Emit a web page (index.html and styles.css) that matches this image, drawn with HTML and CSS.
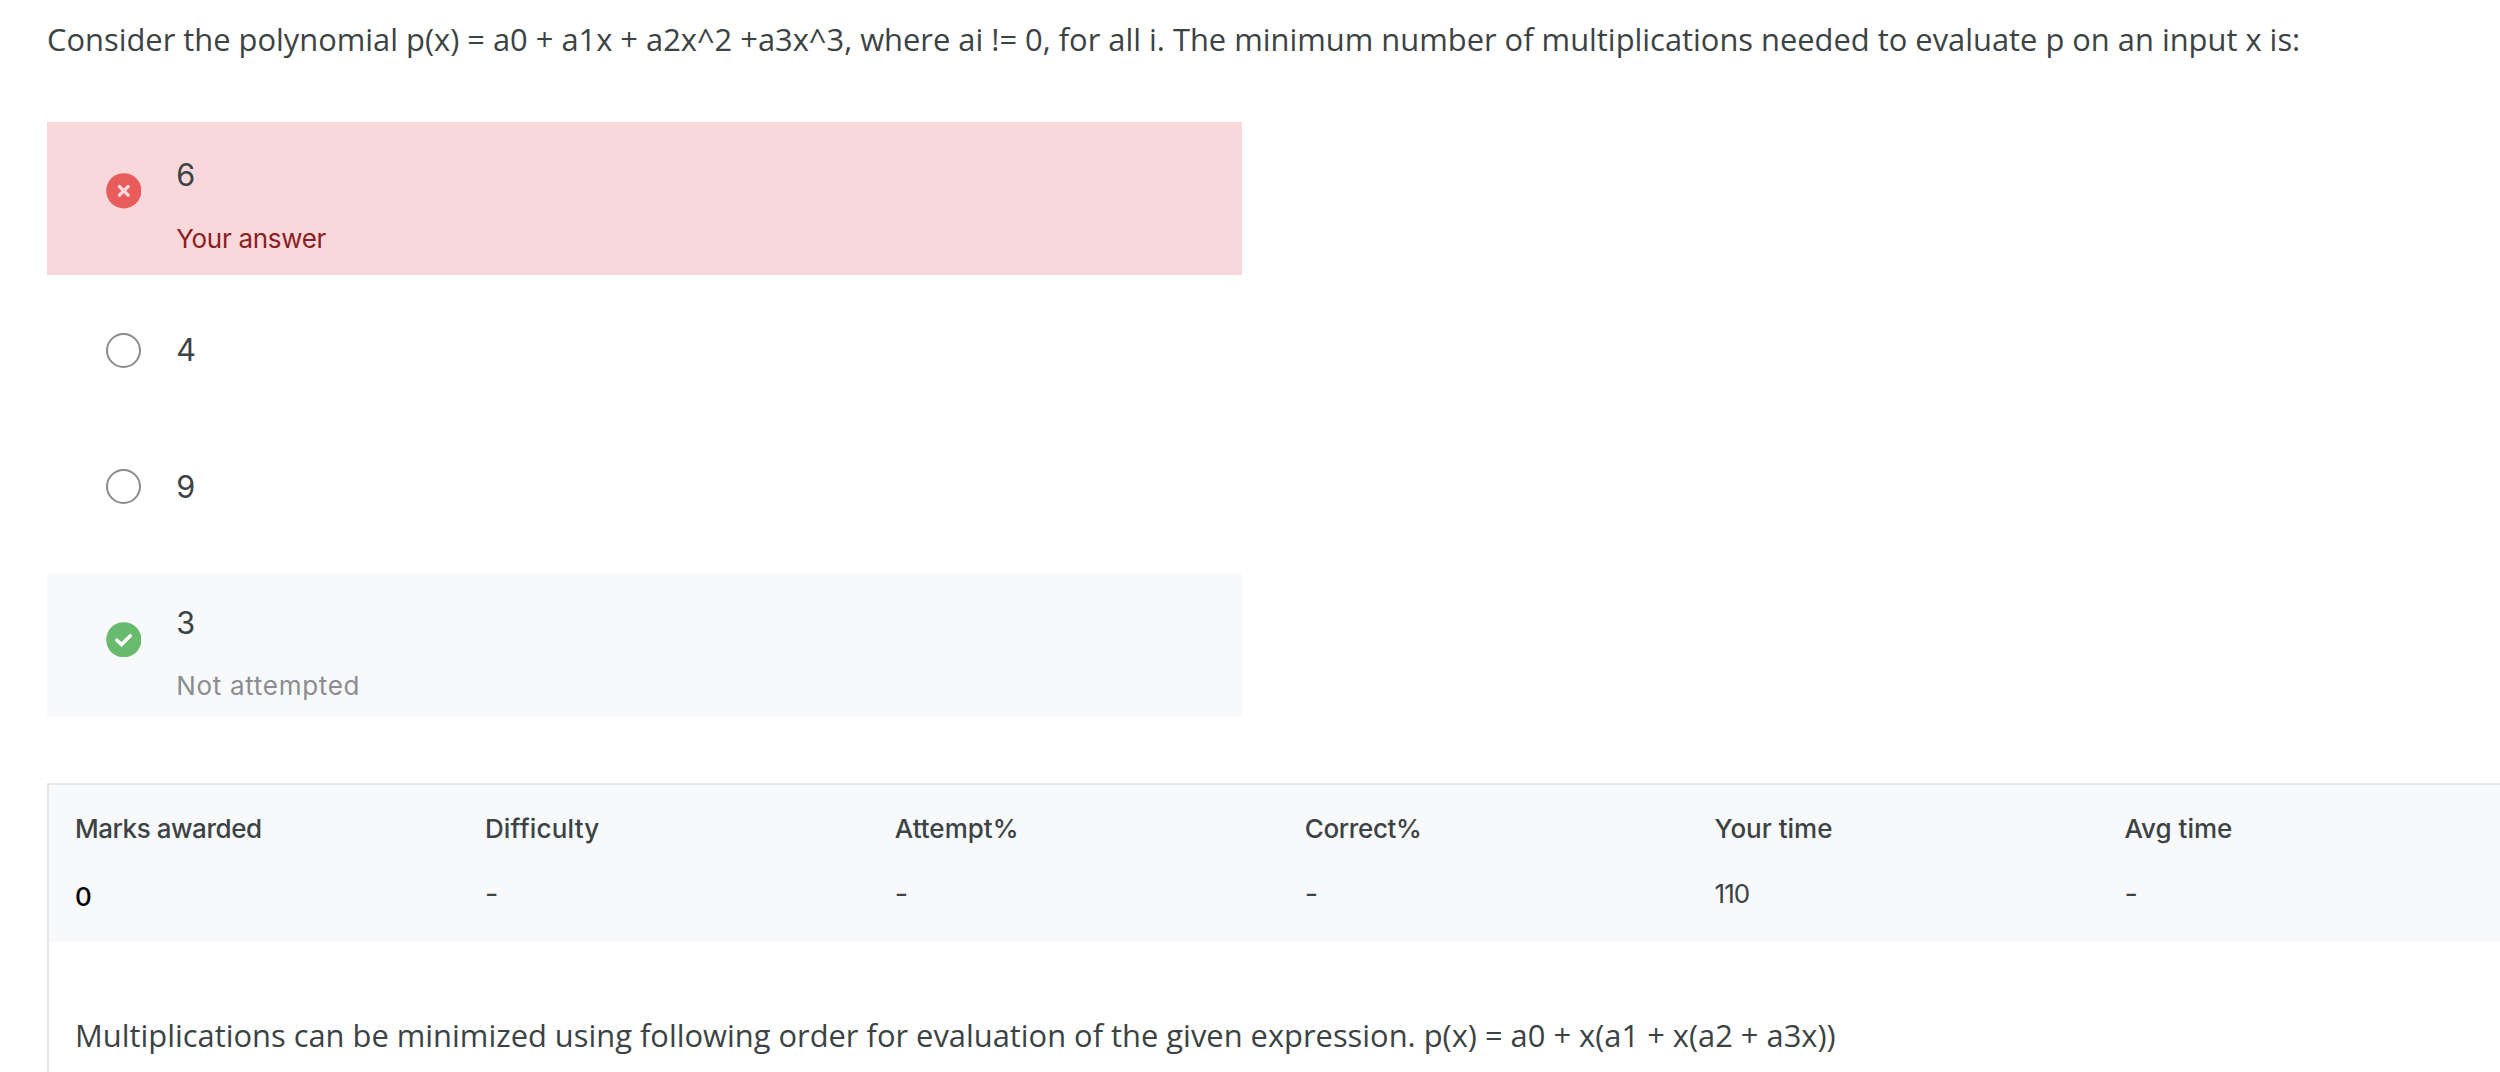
FILE: index.html
```html
<!DOCTYPE html>
<html lang="en">
<head>
<meta charset="utf-8">
<title>Question review</title>
<link rel="stylesheet" href="styles.css">
</head>
<body>
<main class="review">
  <p class="question">Consider the polynomial p(x) = a0 + a1x + a2x^2 +a3x^3, where ai != 0, for all i. The minimum number of multiplications needed to evaluate p on an input x is:</p>
  <ul class="options">
    <li class="option option-wrong">
      <svg class="mark" viewBox="0 0 36 36"><circle cx="18" cy="18" r="17.8" fill="#e85c5c"/><path d="M13.6 13.6l8.8 8.8M22.4 13.6l-8.8 8.8" fill="none" stroke="#f9d8db" stroke-width="3.4" stroke-linecap="round"/></svg>
      <div class="answer"><span class="value">6</span><span class="note note-wrong">Your answer</span></div>
    </li>
    <li class="option option-plain">
      <span class="radio"></span>
      <div class="answer"><span class="value value-high">4</span></div>
    </li>
    <li class="option option-plain">
      <span class="radio"></span>
      <div class="answer"><span class="value">9</span></div>
    </li>
    <li class="option option-right">
      <svg class="mark" viewBox="0 0 36 36"><circle cx="18" cy="18" r="17.8" fill="#68bb6c"/><path d="M11 18.4l4.7 4.4 8.9-8.8" fill="none" stroke="#fff" stroke-width="3.6" stroke-linecap="round" stroke-linejoin="miter"/></svg>
      <div class="answer"><span class="value">3</span><span class="note note-missed">Not attempted</span></div>
    </li>
  </ul>
  <section class="report">
    <dl class="stats">
      <div class="stat stat-marks"><dt>Marks awarded</dt><dd>0</dd></div>
      <div class="stat stat-difficulty"><dt>Difficulty</dt><dd class="empty">-</dd></div>
      <div class="stat"><dt>Attempt%</dt><dd class="empty">-</dd></div>
      <div class="stat stat-correct"><dt>Correct%</dt><dd class="empty">-</dd></div>
      <div class="stat stat-time"><dt>Your time</dt><dd>110</dd></div>
      <div class="stat"><dt>Avg time</dt><dd class="empty">-</dd></div>
    </dl>
    <p class="solution">Multiplications can be minimized using following order for evaluation of the given expression. p(x) = a0 + x(a1 + x(a2 + a3x))</p>
  </section>
</main>
</body>
</html>
```
FILE: styles.css
```css
* { box-sizing: border-box; }
body {
  margin: 0;
  background: #fff;
  color: #3c4344;
  font-family: Inter, "Liberation Sans", sans-serif;
  overflow: hidden;
}
.review { height: 1072px; padding: 16px 0 0 47px; overflow: hidden; }
.question, .solution {
  margin: 0;
  font: 30.875px/46px "Open Sans", "Noto Sans", sans-serif;
  white-space: nowrap;
}
.options { width: 1194.6px; margin: 60px 0 0; padding: 0; list-style: none; }
.option { display: flex; align-items: center; gap: 34.8px; padding-left: 58.8px; }
.option-wrong { height: 152.5px; margin-bottom: 8px; background: #f9d8db; }
.option-plain { height: 136px; }
.option-right { height: 143.5px; margin-top: 19px; background: #f8f9fb; }
.option-wrong, .option-right { align-items: flex-start; }
.mark { flex: none; width: 35.6px; height: 35.6px; }
.option-wrong .mark { margin-top: 51.4px; }
.option-right .mark { margin-top: 48.2px; }
.radio { flex: none; width: 35.6px; height: 35.6px; border: 2px solid #888c90; border-radius: 50%; }
.answer { display: flex; flex-direction: column; align-items: flex-start; }
.option-wrong .answer { padding-top: 33px; }
.option-right .answer { padding-top: 29px; }
.value { font-size: 30.6px; line-height: 40px; }
.value-high { padding-bottom: 2px; }
.note { margin-top: 27px; font-size: 26px; line-height: 34px; }
.note-wrong { color: #8b2023; letter-spacing: -0.3px; }
.note-missed { margin-top: 26px; color: #8a8d91; letter-spacing: 0.7px; }
.report { margin-top: 66px; border: solid #e6e6e6; border-width: 2px 0 0 2px; height: 400px; }
.stats {
  display: grid;
  grid-template-columns: repeat(6, 409.9px);
  height: 157px;
  margin: 0;
  padding: 27px 0 0 26px;
  background: #f8f9fb;
}
dt { font-size: 26px; line-height: 34px; font-weight: 500; }
dd { margin: 31px 0 0; font-size: 26px; line-height: 34px; }
.empty { font-size: 29px; }
.stat-marks dt { letter-spacing: -0.45px; }
.stat-marks dd { margin-top: 34px; color: #000; font-weight: 500; }
.stat-difficulty dt { letter-spacing: 0.2px; }
.stat-correct dt { letter-spacing: -0.35px; }
.stat-time dd { letter-spacing: -1px; }
.solution { padding: 70px 0 0 26px; }
```
